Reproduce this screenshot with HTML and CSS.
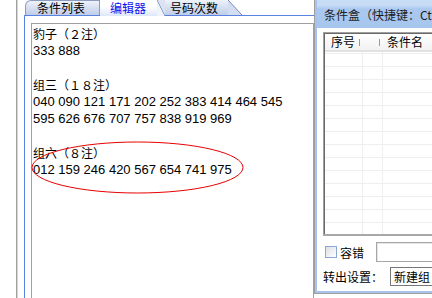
FILE: index.html
```html
<!DOCTYPE html>
<html lang="zh-CN">
<head>
<meta charset="utf-8">
<title>编辑器</title>
<link rel="stylesheet" href="styles.css">
</head>
<body>
<div class="screen">
  <div class="left">
    <div class="frame">
      <div class="tabctl">
        <div class="tabs">
          <div class="tab tab-first"><span class="tab-label">条件列表</span></div>
          <div class="tab tab-active"><span class="tab-label">编辑器</span><span class="slant slant-a"></span></div>
          <div class="tab tab-last"><span class="tab-label">号码次数</span><span class="slant slant-b"></span></div>
        </div>
        <div class="page">
          <div class="editor">
            <div class="line cjk">豹子（２注）</div>
            <div class="line">333 888</div>
            <div class="line"></div>
            <div class="line cjk">组三（１８注）</div>
            <div class="line">040 090 121 171 202 252 383 414 464 545</div>
            <div class="line">595 626 676 707 757 838 919 969</div>
            <div class="line"></div>
            <div class="line cjk">组六（８注）</div>
            <div class="line">012 159 246 420 567 654 741 975</div>
          </div>
        </div>
      </div>
    </div>
  </div>
  <div class="panel">
    <div class="panel-inner">
      <div class="title">条件盒（快捷键：Ctrl+F）</div>
      <div class="panel-body">
        <div class="list">
          <div class="list-head">
            <div class="hcell hcell-1">序号</div>
            <div class="hcell hcell-2"></div>
            <div class="hcell hcell-3">条件名</div>
          </div>
          <div class="list-rows"></div>
        </div>
        <div class="row row-check">
          <span class="checkbox"></span>
          <span class="check-label">容错</span>
          <span class="textbox"></span>
        </div>
        <div class="row row-out">
          <span class="out-label">转出设置：</span>
          <span class="select">新建组</span>
        </div>
      </div>
    </div>
  </div>
</div>
<svg class="mark" width="432" height="298" viewBox="0 0 432 298" aria-hidden="true">
  <ellipse cx="137.5" cy="167.5" rx="105.5" ry="25.5" fill="none" stroke="#e80000" stroke-width="1"/>
</svg>
</body>
</html>
```

FILE: styles.css
```css
html, body {
  margin: 0;
  padding: 0;
}
body {
  width: 432px;
  height: 298px;
  overflow: hidden;
  background: #ffffff;
  position: relative;
  font-family: "Liberation Sans", "Noto Sans CJK SC", sans-serif;
  color: #000000;
}
.screen {
  display: flex;
  width: 432px;
  height: 298px;
  overflow: hidden;
}

/* left side */
.left {
  flex: 0 0 314px;
  box-sizing: border-box;
  padding-left: 16px;
  display: flex;
}
.frame {
  flex: 1;
  display: flex;
  border-left: 1px solid #a0a0a0;
  box-shadow: inset 1px 0 #d6d6d6;
  padding-left: 7px;
}
.tabctl {
  flex: 1;
  min-width: 0;
  display: flex;
  flex-direction: column;
}
.tabs {
  display: flex;
  align-items: flex-start;
  height: 15px;
  padding-left: 1px;
  font-family: "Noto Sans CJK SC", sans-serif;
  font-size: 12px;
}
.tab {
  display: flex;
  height: 15px;
}
.tab-label {
  display: block;
  line-height: 15px;
  white-space: nowrap;
}
.tab-first {
  width: 75px;
  box-sizing: border-box;
  border-left: 1px solid #8a9cc0;
  border-right: 1px solid #8a9cc0;
  border-top: 1px solid #8a9cc0;
  border-top-left-radius: 6px;
  background: linear-gradient(#eef2fa, #bfcdea);
}
.tab-first .tab-label {
  padding-left: 11px;
  line-height: 14px;
}
.tab-active {
  height: 16px;
  position: relative;
  z-index: 1;
}
.tab-active .tab-label {
  width: 57px;
  box-sizing: border-box;
  padding-left: 10px;
  color: #1010f0;
  background: linear-gradient(#ffffff, #ffffff 40%, #dde7f9);
}
.slant {
  display: block;
  height: 100%;
}
.slant-a {
  width: 8px;
  background: linear-gradient(to top right, #eef3fc calc(50% - 0.7px), #6f86b6 50%, #dbe3f3 calc(50% + 0.7px));
}
.tab-last .tab-label {
  width: 63px;
  box-sizing: border-box;
  padding-left: 5px;
  background: linear-gradient(#eef2fa, #bfcdea);
}
.slant-b {
  width: 14px;
  background: linear-gradient(to top right, #d3ddf1 calc(50% - 0.7px), #6f86b6 50%, #ffffff calc(50% + 0.7px));
}
.page {
  flex: 1;
  display: flex;
  flex-direction: column;
  border-left: 1px solid #5a82e2;
  border-top: 1px solid #5a82e2;
  padding: 7px 0 0 6px;
  background: #ffffff;
}
.editor {
  flex: 1;
  border: 1px solid #a0a0a0;
  border-bottom: none;
  padding: 1px 0 0 1px;
  font-size: 13px;
}
.line {
  height: 17px;
  line-height: 17px;
  white-space: nowrap;
}
.cjk {
  font-family: "Noto Sans CJK SC", sans-serif;
  font-size: 12px;
}

/* right panel */
.panel {
  flex: 0 0 170px;
  height: 294px;
  box-sizing: border-box;
  border-left: 1px solid #a0a0a0;
  border-bottom: 1px solid #a0a0a0;
}
.panel-inner {
  height: 100%;
  box-sizing: border-box;
  border-left: 2px solid #a8c2ee;
  border-bottom: 2px solid #a8c2ee;
  display: flex;
  flex-direction: column;
  font-family: "Noto Sans CJK SC", sans-serif;
  font-size: 12px;
}
.title {
  height: 28px;
  box-sizing: border-box;
  padding: 2px 0 0 7px;
  line-height: 26px;
  white-space: nowrap;
  overflow: hidden;
  color: #1c1c1c;
  background: linear-gradient(#c9dcf6 0, #c9dcf6 5px, #aac8ef 9px, #a7c6ee 100%);
}
.panel-body {
  padding: 4px 0 0 6px;
  display: flex;
  flex-direction: column;
}
.list {
  height: 204px;
  box-sizing: border-box;
  border-top: 1px solid #a0a0a0;
  border-left: 1px solid #a0a0a0;
  border-bottom: 2px solid #a8a8a8;
  box-shadow: inset 1px 1px #696969;
  padding: 1px 0 0 1px;
  display: flex;
  flex-direction: column;
}
.list-head {
  display: flex;
  height: 16px;
  border-bottom: 2px solid #e2e2e2;
  background: linear-gradient(#ffffff, #f2f2f2);
  line-height: 16px;
}
.hcell {
  box-sizing: border-box;
  white-space: nowrap;
  background-image: linear-gradient(#9a9a9a, #9a9a9a);
  background-size: 1px 7px;
  background-position: right 1px center;
  background-repeat: no-repeat;
}
.hcell-1 {
  width: 36px;
  padding-left: 6px;
}
.hcell-2 {
  width: 20px;
}
.hcell-3 {
  flex: 1;
  padding-left: 6px;
  background-image: none;
}
.list-rows {
  flex: 1;
  background-image:
    linear-gradient(to right, transparent 37px, #eeeeee 37px, #eeeeee 38px, transparent 38px, transparent 57px, #eeeeee 57px, #eeeeee 58px, transparent 58px),
    repeating-linear-gradient(to bottom, #eeeeee 0, #eeeeee 1px, transparent 1px, transparent 13px);
  background-position: 0 0, 0 1px;
}
.row {
  display: flex;
  align-items: center;
  white-space: nowrap;
}
.row-check {
  margin-top: 6px;
  height: 20px;
}
.checkbox {
  width: 12px;
  height: 12px;
  box-sizing: border-box;
  margin-left: 2px;
  border: 1px solid #8aa8d2;
  background: linear-gradient(135deg, #dcdfe4, #ffffff);
}
.check-label {
  margin-left: 3px;
  width: 26px;
}
.textbox {
  margin-left: 10px;
  width: 100px;
  height: 20px;
  box-sizing: border-box;
  border: 1px solid #a6a6a6;
  box-shadow: inset 1px 1px #e6e6e6;
  background: #ffffff;
}
.row-out {
  margin-top: 5px;
  height: 19px;
}
.out-label {
  width: 67px;
}
.select {
  width: 100px;
  height: 19px;
  box-sizing: border-box;
  border: 1px solid #777777;
  padding-left: 3px;
  line-height: 17px;
  background: #ffffff;
}

/* annotation */
.mark {
  position: absolute;
  left: 0;
  top: 0;
  pointer-events: none;
}
```
